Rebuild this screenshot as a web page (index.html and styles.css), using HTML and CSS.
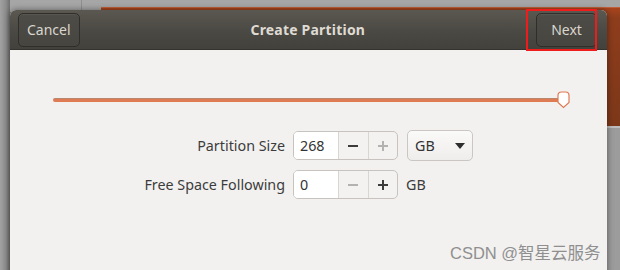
FILE: index.html
```html
<!DOCTYPE html>
<html>
<head>
<meta charset="utf-8">
<link rel="stylesheet" href="styles.css">
</head>
<body>
<div class="desktop">
  <div class="sep-line"></div>
  <div class="back-window"></div>
  <div class="back-lower"></div>
  <div class="dialog">
    <div class="header">
      <button class="hbtn">Cancel</button>
      <div class="title">Create Partition</div>
      <button class="hbtn">Next</button>
    </div>
    <div class="content">
      <div class="scale">
        <div class="track"></div>
        <svg class="thumb" width="13" height="18" viewBox="0 0 13 18">
          <path d="M1 4.5 Q1 1 4.5 1 L8.5 1 Q12 1 12 4.5 L12 11.5 L6.5 16.5 L1 11.5 Z" fill="#ffffff" stroke="#e07a52" stroke-width="1.2"/>
        </svg>
      </div>
      <div class="form">
        <div class="label">Partition Size</div>
        <div class="spin">
          <div class="entry">268</div>
          <div class="sbtn"><svg width="12" height="12" viewBox="0 0 12 12"><rect x="1" y="5" width="10" height="2" fill="#3c3c3c"/></svg></div>
          <div class="sbtn"><svg width="12" height="12" viewBox="0 0 12 12"><rect x="1" y="5" width="10" height="2" fill="#b4b2b0"/><rect x="5" y="1" width="2" height="10" fill="#b4b2b0"/></svg></div>
        </div>
        <div class="combo"><span>GB</span><svg width="10" height="6" viewBox="0 0 10 6"><path d="M0 0 L10 0 L5 6 Z" fill="#2e2e2e"/></svg></div>

        <div class="label">Free Space Following</div>
        <div class="spin">
          <div class="entry">0</div>
          <div class="sbtn"><svg width="12" height="12" viewBox="0 0 12 12"><rect x="1" y="5" width="10" height="2" fill="#b4b2b0"/></svg></div>
          <div class="sbtn"><svg width="12" height="12" viewBox="0 0 12 12"><rect x="1" y="5" width="10" height="2" fill="#3c3c3c"/><rect x="5" y="1" width="2" height="10" fill="#3c3c3c"/></svg></div>
        </div>
        <div class="unit">GB</div>
      </div>
    </div>
  </div>
  <div class="highlight"></div>
  <div class="watermark">CSDN @智星云服务</div>
</div>
</body>
</html>
```

FILE: styles.css
```css
* { box-sizing: border-box; }
html, body { margin: 0; padding: 0; }
body {
  width: 620px;
  height: 270px;
  overflow: hidden;
  font-family: "Noto Sans", "Open Sans", sans-serif;
}
.desktop {
  position: relative;
  width: 620px;
  height: 270px;
  background: linear-gradient(90deg, #a2a2a2 0px, #8c8c8c 6px, #6e6e6e 10px, #9a9a9a 12px);
  background-color: #a3a3a3;
  overflow: hidden;
}
.desktop::before {
  content: "";
  position: absolute;
  left: 10px;
  top: 0;
  right: 0;
  height: 12px;
  background: #a6a6a6;
}
.sep-line {
  position: absolute;
  left: 81px;
  top: 0;
  width: 1px;
  height: 12px;
  background: #8e8e8e;
}
.back-window {
  position: absolute;
  left: 101px;
  top: 7px;
  right: 0;
  height: 119px;
  background: linear-gradient(180deg, #a8441e 0px, #8e3d1c 10px, #7c3719 100%);
  border-top: 1px solid #c0603a;
}
.back-lower {
  position: absolute;
  left: 101px;
  top: 126px;
  right: 0;
  bottom: 0;
  background: linear-gradient(90deg, #7a7a7a, #9c9c9c);
  border-top: 2px solid #bdbdbd;
}
.dialog {
  position: absolute;
  left: 10px;
  top: 10px;
  width: 597px;
  height: 270px;
  border-radius: 6px 6px 0 0;
  box-shadow: 0 0 6px rgba(0, 0, 0, 0.45);
  background: #f2f1f0;
  overflow: hidden;
}
.header {
  height: 40px;
  display: flex;
  align-items: center;
  justify-content: space-between;
  padding: 0 10px 0 8px;
  background: linear-gradient(180deg, #5a5850 0%, #4c4a44 50%, #43413c 100%);
  border-bottom: 1px solid #35332f;
}
.hbtn {
  height: 34px;
  min-width: 61px;
  padding: 0 8px 1px 8px;
  font-family: "Noto Sans", "Open Sans", sans-serif;
  font-size: 14px;
  color: #d9d6cf;
  text-align: center;
  background: linear-gradient(180deg, #4e4c46, #47453f);
  border: 1px solid #302e2a;
  border-radius: 5px;
  box-shadow: inset 0 1px 0 rgba(255, 255, 255, 0.06);
}
.title {
  font-weight: bold;
  font-size: 14px;
  color: #dfdbd3;
  letter-spacing: 0.2px;
}
.content {
  padding-top: 41px;
}
.scale {
  display: flex;
  align-items: center;
  margin-left: 43px;
  width: 517px;
  height: 18px;
}
.track {
  flex: 1;
  height: 4px;
  background: #de7b53;
  border-top: 1px solid #b9876f;
  border-radius: 2px;
}
.thumb {
  margin-left: -6px;
  display: block;
}
.form {
  margin-top: 21px;
  display: grid;
  grid-template-columns: 275px 105px auto;
  column-gap: 8px;
  row-gap: 9px;
  align-items: center;
  font-size: 14.3px;
  color: #3d3d3d;
}
.label {
  text-align: right;
  color: #3c3c3c;
}
.spin {
  display: flex;
  height: 29px;
  border: 1px solid #c8c3be;
  border-radius: 5px;
  background: #f3f2f1;
  overflow: hidden;
}
.entry {
  width: 44px;
  background: #ffffff;
  padding-left: 6px;
  line-height: 27px;
  color: #333333;
}
.sbtn {
  flex: 1;
  display: flex;
  align-items: center;
  justify-content: center;
  border-left: 1px solid #d9d6d2;
}
.combo {
  margin-left: 1px;
  width: 66px;
  height: 31px;
  display: flex;
  align-items: center;
  justify-content: space-between;
  padding: 0 7px 0 7px;
  border: 1px solid #cbc6c1;
  border-radius: 5px;
  background: linear-gradient(180deg, #fafaf9, #efedeb);
  color: #333333;
}
.unit {
  color: #3c3c3c;
}
.highlight {
  position: absolute;
  left: 526px;
  top: 9px;
  width: 71px;
  height: 42px;
  border: 2px solid #f01c1c;
}
.watermark {
  position: absolute;
  left: 450px;
  top: 240px;
  font-family: "Liberation Sans", "Noto Sans CJK SC", sans-serif;
  font-size: 16.5px;
  color: #8f8f8f;
  white-space: nowrap;
}
```
